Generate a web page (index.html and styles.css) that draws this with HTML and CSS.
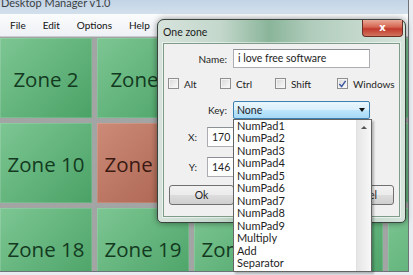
FILE: index.html
```html
<!DOCTYPE html>
<html lang="en">
<head>
  <meta charset="UTF-8">
  <title>Desktop Manager v1.0</title>
  <link rel="stylesheet" href="styles.css">
</head>
<body>
  <div class="app">
    <div class="titlebar"><span class="title-text">Desktop Manager v1.0</span></div>
    <div class="menubar">
      <span class="menu-item">File</span>
      <span class="menu-item">Edit</span>
      <span class="menu-item">Options</span>
      <span class="menu-item">Help</span>
    </div>
    <div class="zones">
      <div class="zone">Zone 2</div>
      <div class="zone">Zone 3</div>
      <div class="zone">Zone 4</div>
      <div class="zone">Zone 5</div>
      <div class="zone"></div>
      <div class="zone">Zone 10</div>
      <div class="zone zone-active">Zone 11</div>
      <div class="zone">Zone 12</div>
      <div class="zone">Zone 13</div>
      <div class="zone"></div>
      <div class="zone">Zone 18</div>
      <div class="zone">Zone 19</div>
      <div class="zone">Zone 20</div>
      <div class="zone">Zone 21</div>
      <div class="zone"></div>
    </div>

    <div class="dialog">
      <div class="dialog-title">
        <span class="dialog-caption">One zone</span>
        <span class="close-btn">x</span>
      </div>
      <div class="dialog-body">
        <div class="row">
          <label class="lbl lbl-wide">Name:</label>
          <div class="textbox textbox-name">i love free software</div>
        </div>
        <div class="row checks">
          <span class="check"><span class="box"></span>Alt</span>
          <span class="check"><span class="box"></span>Ctrl</span>
          <span class="check"><span class="box"></span>Shift</span>
          <span class="check"><span class="box">
            <svg width="10" height="10" viewBox="0 0 10 10"><path d="M1.5 5 L4 7.8 L8.5 1.5" fill="none" stroke="#3d5aa0" stroke-width="1.6"/></svg>
          </span>Windows</span>
        </div>
        <div class="row row-key">
          <label class="lbl lbl-wide">Key:</label>
          <div class="combo-wrap">
            <div class="combo">None<span class="arrow"></span></div>
            <div class="droplist">
              <div class="items">
                <div>NumPad1</div>
                <div>NumPad2</div>
                <div>NumPad3</div>
                <div>NumPad4</div>
                <div>NumPad5</div>
                <div>NumPad6</div>
                <div>NumPad7</div>
                <div>NumPad8</div>
                <div>NumPad9</div>
                <div>Multiply</div>
                <div>Add</div>
                <div>Separator</div>
              </div>
              <div class="scrollbar"><span class="up"></span></div>
            </div>
          </div>
        </div>
        <div class="row row-x">
          <label class="lbl lbl-small">X:</label>
          <div class="textbox textbox-num">170</div>
        </div>
        <div class="row row-y">
          <label class="lbl lbl-small">Y:</label>
          <div class="textbox textbox-num">146</div>
        </div>
        <div class="row buttons">
          <span class="btn">Ok</span>
          <span class="btn">Cancel</span>
        </div>
      </div>
    </div>
  </div>
</body>
</html>
```

FILE: styles.css
```css
body { margin: 0; width: 413px; height: 275px; overflow: hidden; background: #e9edf1; font-family: Lato, "Open Sans", sans-serif; color: #1e1e1e; }

.app { position: relative; width: 408px; height: 271px; border-right: 1px solid #6d7379; border-bottom: 1px solid #6d7379; background: #a6a8a7; }

.titlebar { height: 14px; overflow: hidden; background: linear-gradient(#c3d4e6, #d3e0ec); }
.title-text { display: block; margin-top: -4px; padding-left: 1px; font-size: 11px; color: #3b3f44; }

.menubar { height: 22px; display: flex; align-items: center; gap: 17px; padding-left: 10px; background: linear-gradient(#fbfcfd, #eef1f5); border-bottom: 1px solid #c9ccd0; font-size: 10px; color: #111; }

.zones { display: grid; grid-template-columns: repeat(5, 92px); grid-template-rows: repeat(3, 80px); gap: 5px; padding-top: 1px; height: 233px; overflow: hidden; background: #a3a5a4; }
.zone { display: flex; align-items: center; justify-content: center; padding-top: 2px; font-family: "Open Sans", sans-serif; font-size: 20.5px; color: #133a21; background: linear-gradient(135deg, #7dc693, #4aa266); box-shadow: inset 0 0 0 1px rgba(255,255,255,0.15); white-space: nowrap; }
.zone-active { background: linear-gradient(135deg, #cc8b78, #a9614d); color: #3a1a12; }

.dialog { position: absolute; left: 157px; top: 19px; width: 247px; border: 1px solid #38443d; border-radius: 7px 7px 5px 5px; background-color: #7fae90; background-image: linear-gradient(90deg, #d6e3dc 0%, #c4d8cc 25%, #8ab59a 45%, #b0ccbb 62%, #d6e4dc 100%); box-shadow: 0 0 6px rgba(0,0,0,0.45); }
.dialog-title { height: 23px; display: flex; align-items: flex-start; }
.dialog-caption { padding: 6px 0 0 5px; font-size: 10.5px; color: #1c1c1c; }
.close-btn { margin-left: auto; margin-right: 2px; width: 39px; height: 16px; border: 1px solid #6a2e28; border-top: none; border-radius: 0 0 4px 4px; background: linear-gradient(#eaa996, #d36450 45%, #c0392d 55%, #d2745c); color: #fff; font-family: "DejaVu Sans", sans-serif; font-size: 10px; font-weight: bold; text-align: center; line-height: 15px; }

.dialog-body { margin: 0 5px 5px 5px; padding: 5px 0 11px 0; border: 1px solid #7f9c8a; background: #f0f0f0; box-shadow: 0 0 0 1px rgba(255,255,255,0.5); font-size: 10px; position: relative; }

.row { display: flex; align-items: center; }
.lbl { text-align: right; color: #1e1e1e; }
.lbl-wide { width: 63px; margin-right: 6px; }
.lbl-small { width: 33px; margin-right: 10px; }

.textbox { box-sizing: border-box; height: 19px; border: 1px solid #abadb3; border-top-color: #8c8f96; background: #fff; padding: 0 4px; line-height: 17px; }
.textbox-name { width: 137px; font-size: 10.5px; }
.textbox-num { width: 46px; height: 20px; line-height: 18px; font-size: 10.5px; }

.checks { margin-top: 9px; height: 13px; }
.check { display: flex; align-items: center; gap: 5px; }
.check:nth-child(1) { margin-left: 4px; width: 52px; }
.check:nth-child(2) { width: 55px; }
.check:nth-child(3) { width: 62px; }
.box { box-sizing: border-box; width: 11px; height: 11px; border: 1px solid #8f8f8f; background: linear-gradient(135deg, #d8d8d8, #fbfbfb); box-shadow: inset 0 0 0 1px #f4f4f4; display: flex; align-items: center; justify-content: center; }

.row-key { margin-top: 11px; }
.combo-wrap { position: relative; }
.combo { box-sizing: border-box; width: 137px; height: 18px; border: 1px solid #3c7fb1; border-radius: 2px; background: linear-gradient(#eaf6fd, #d9f0fc 50%, #bee6fd 51%, #a7d9f5); padding-left: 3px; line-height: 16px; font-size: 10.5px; position: relative; }
.arrow { position: absolute; right: 4px; top: 6px; border-left: 3px solid transparent; border-right: 3px solid transparent; border-top: 4px solid #111; }

.droplist { position: absolute; left: 0; top: 18px; width: 139px; height: 153px; box-sizing: border-box; border: 1px solid #646464; background: #fff; display: flex; box-shadow: 2px 2px 2px rgba(0,0,0,0.25); z-index: 2; font-size: 11px; }
.items { flex: 1; padding-left: 3px; line-height: 12.45px; }
.scrollbar { width: 14px; background: linear-gradient(90deg, #e6e6e6, #f7f7f7); border-left: 1px solid #e0e0e0; position: relative; }
.up { position: absolute; left: 4px; top: 6px; border-left: 3px solid transparent; border-right: 3px solid transparent; border-bottom: 3px solid #555; }

.row-x { margin-top: 8px; }
.row-y { margin-top: 10px; }

.buttons { margin-top: 8px; justify-content: space-between; padding: 0 5px 0 5px; }
.btn { box-sizing: border-box; width: 65px; height: 20px; border: 1px solid #707070; border-radius: 3px; background: linear-gradient(#f2f2f2, #ebebeb 50%, #dddddd 51%, #cfcfcf); text-align: center; line-height: 18px; font-size: 10.5px; }
```
